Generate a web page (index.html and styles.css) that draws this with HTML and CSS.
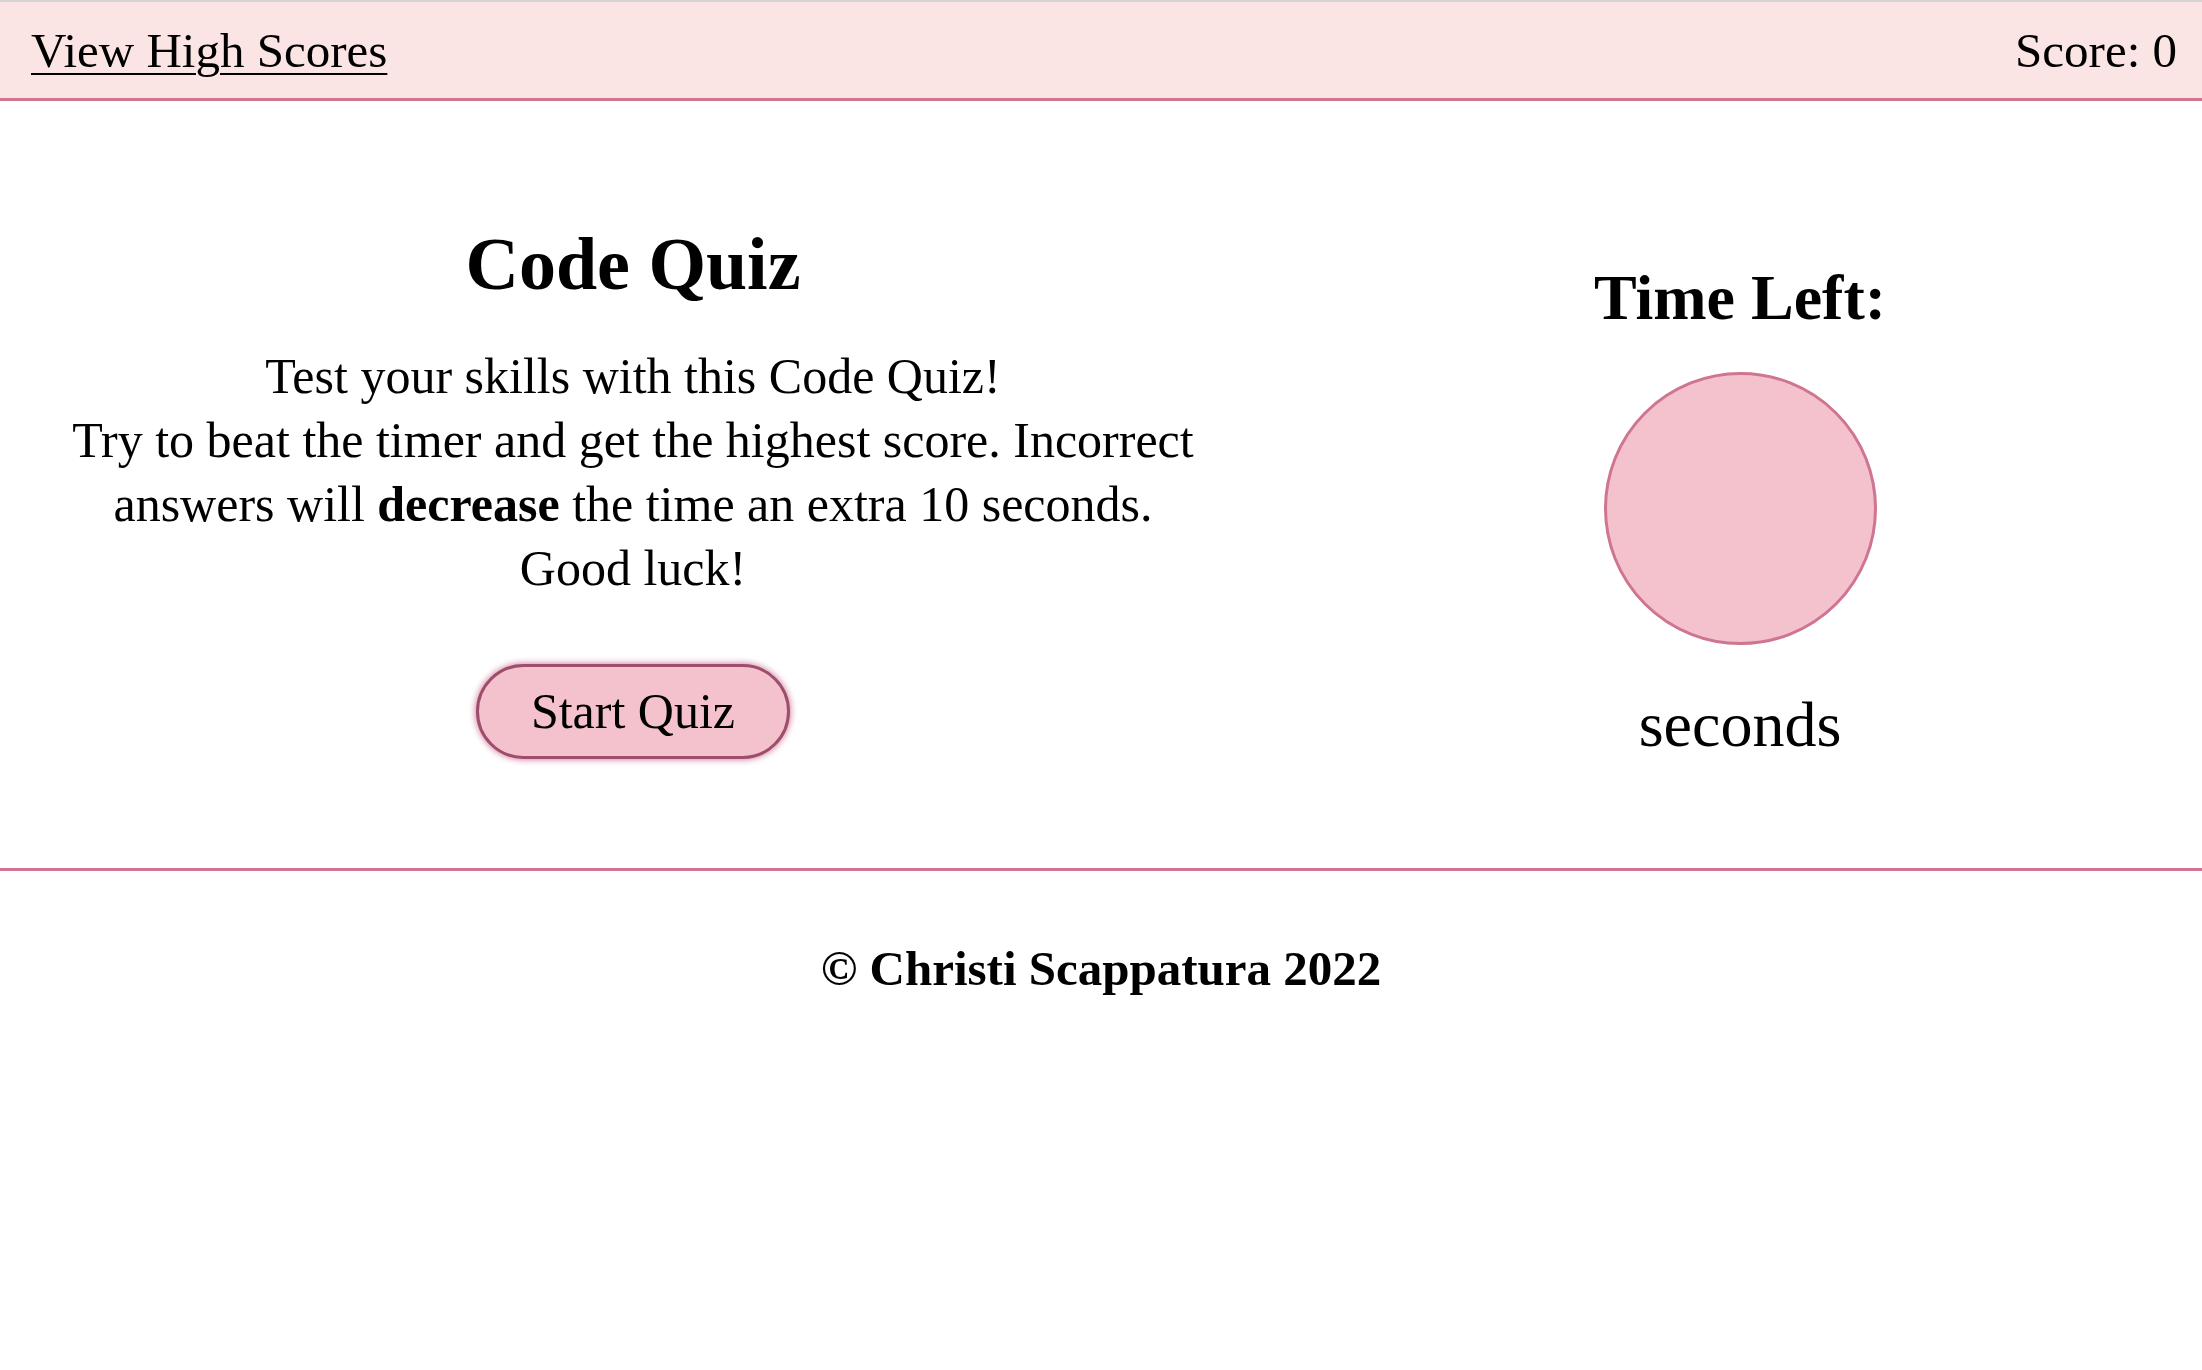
FILE: index.html
```html
<!DOCTYPE html>
<html lang="en">
<head>
<meta charset="utf-8">
<title>Code Quiz</title>
<link rel="stylesheet" href="styles.css">
</head>
<body>
<header class="topbar">
  <a class="scores-link" href="#">View High Scores</a>
  <div class="score">Score: 0</div>
</header>
<main class="content">
  <section class="intro">
    <h1 class="title">Code Quiz</h1>
    <p class="lead">Test your skills with this Code Quiz!<br>Try to beat the timer and get the highest score. Incorrect answers will <strong>decrease</strong> the time an extra 10 seconds.<br>Good luck!</p>
    <button class="start-btn" type="button">Start Quiz</button>
  </section>
  <aside class="timer">
    <h2 class="timer-title">Time Left:</h2>
    <div class="timer-circle"></div>
    <div class="timer-unit">seconds</div>
  </aside>
</main>
<footer class="footer">
  <p class="copy">© Christi Scappatura 2022</p>
</footer>
</body>
</html>
```
FILE: styles.css
```css
html, body {
  margin: 0;
  padding: 0;
  background: #ffffff;
}
body {
  font-family: "Liberation Serif", "Times New Roman", serif;
  color: #000;
}
.topbar {
  box-sizing: border-box;
  height: 101px;
  border-top: 2px solid #d3d3d3;
  border-bottom: 3px solid #cf7591;
  background: #fae4e4;
  display: flex;
  align-items: center;
  justify-content: space-between;
  padding: 0 25px 0 31px;
  font-size: 49px;
}
.scores-link {
  color: #000;
  text-decoration: underline;
  text-decoration-thickness: 2px;
  text-underline-offset: 6px;
}
.content {
  box-sizing: border-box;
  height: 770px;
  display: grid;
  grid-template-columns: 1266px 1fr;
  align-items: start;
  padding-top: 119px;
  border-bottom: 3px solid #cf7591;
}
.intro {
  display: flex;
  flex-direction: column;
  align-items: center;
  text-align: center;
}
.title {
  margin: 0;
  font-size: 74px;
  line-height: 1.2;
  font-weight: bold;
}
.lead {
  margin: 35px 60px 0;
  font-size: 50px;
  line-height: 64px;
}
.start-btn {
  margin-top: 64px;
  box-sizing: border-box;
  height: 95px;
  padding: 0 52px;
  font-family: inherit;
  font-size: 50px;
  color: #000;
  background: #f4c2cc;
  border: 3px solid #9e4d6c;
  border-radius: 48px;
  box-shadow: 0 0 6px 1px #d68aa3;
}
.timer {
  display: flex;
  flex-direction: column;
  align-items: center;
  padding-top: 39px;
  padding-left: 12px;
}
.timer-title {
  margin: 0;
  font-size: 64px;
  line-height: 77px;
  font-weight: bold;
}
.timer-circle {
  margin-top: 36px;
  box-sizing: border-box;
  width: 273px;
  height: 273px;
  border-radius: 50%;
  background: #f4c2cc;
  border: 3px solid #cf7591;
}
.timer-unit {
  margin-top: 41px;
  font-size: 64px;
  line-height: 77px;
}
.footer {
  text-align: center;
}
.copy {
  margin: 69px 0 0;
  font-size: 49px;
  font-weight: bold;
}
```
